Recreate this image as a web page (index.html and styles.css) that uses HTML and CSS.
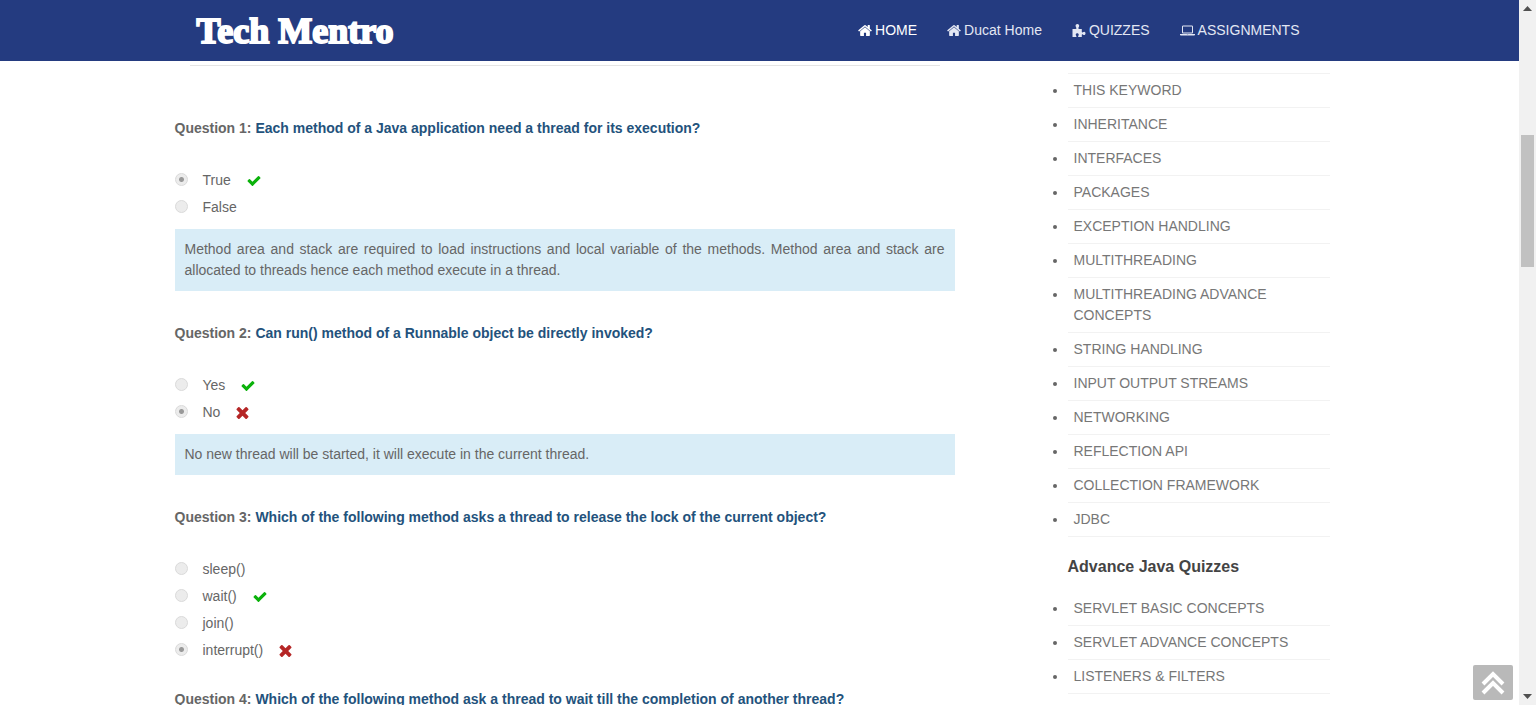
FILE: index.html
```html
<!DOCTYPE html>
<html lang="en">
<head>
<meta charset="utf-8">
<title>Tech Mentro - Java Quiz</title>
<link rel="stylesheet" href="styles.css">
</head>
<body>
<svg class="sprite" aria-hidden="true">
  <symbol id="home" viewBox="64 128 1664 1536"><path d="M1472 992v480q0 26-19 45t-45 19h-384v-384h-256v384h-384q-26 0-45-19t-19-45v-480q0-1 .5-3t.5-3l575-474 575 474q1 2 1 6zm223-69l-62 74q-8 9-21 11h-3q-13 0-21-7l-692-577-692 577q-12 8-24 7-13-2-21-11l-62-74q-8-10-7-23.500t11-21.500l719-599q32-26 76-26t76 26l244 204v-195q0-14 9-23t23-9h192q14 0 23 9t9 23v408l219 182q10 8 11 21.500t-7 23.500z"/></symbol>
  <symbol id="puzzle" viewBox="0 0 14 14"><path d="M0 5.300h3.300c1 0 1.200-.6.800-1.300C3.500 3 3.300 2.300 3.300 1.800 3.300.8 4.100 0 5.200 0s2 .8 2 1.800c0 .7-.3 1.300-.7 2-.5.900-.2 1.500.8 1.500H10v2.900c0 .9.500 1.100 1.200.7.500-.3 1-.5 1.400-.5.900 0 1.400.8 1.400 1.700s-.6 1.700-1.400 1.700c-.5 0-1-.3-1.400-.6-.7-.5-1.200-.2-1.200.6V14H6.900c-.9 0-1.100-.5-.7-1.200.3-.5.5-.9.500-1.400 0-.9-.7-1.500-1.600-1.500s-1.600.6-1.600 1.500c0 .5.300 1 .6 1.400.4.600.2 1.200-.7 1.200H0z"/></symbol>
  <symbol id="laptop" viewBox="0 128 1920 1280"><path d="M416 1152q-66 0-113-47t-47-113v-704q0-66 47-113t113-47h1088q66 0 113 47t47 113v704q0 66-47 113t-113 47h-1088zm-32-864v704q0 13 9.500 22.500t22.500 9.500h1088q13 0 22.500-9.500t9.500-22.500v-704q0-13-9.500-22.500t-22.500-9.500h-1088q-13 0-22.500 9.500t-9.500 22.500zm1376 928h160v96q0 40-47 68t-113 28h-1600q-66 0-113-28t-47-68v-96h1760zm-720 96q16 0 16-16t-16-16h-160q-16 0-16 16t16 16h160z"/></symbol>
  <symbol id="check" viewBox="121 334 1550 1188"><path d="M1671 566q0 40-28 68l-724 724-136 136q-28 28-68 28t-68-28l-136-136-362-362q-28-28-28-68t28-68l136-136q28-28 68-28t68 28l294 295 656-657q28-28 68-28t68 28l136 136q28 28 28 68z"/></symbol>
  <symbol id="times" viewBox="302 366 1188 1188"><path d="M1490 1322q0 40-28 68l-136 136q-28 28-68 28t-68-28l-294-294-294 294q-28 28-68 28t-68-28l-136-136q-28-28-28-68t28-68l294-294-294-294q-28-28-28-68t28-68l136-136q28-28 68-28t68 28l294 294 294-294q28-28 68-28t68 28l136 136q28 28 28 68t-28 68l-294 294 294 294q28 28 28 68z"/></symbol>
</svg>

<header class="topbar">
  <div class="container topbar-inner">
    <a class="logo" href="#">Tech Mentro</a>
    <nav class="menu">
      <a class="active" href="#"><svg class="nav-icon"><use href="#home"/></svg>HOME</a>
      <a href="#"><svg class="nav-icon"><use href="#home"/></svg>Ducat Home</a>
      <a href="#"><svg class="nav-icon"><use href="#puzzle"/></svg>QUIZZES</a>
      <a href="#"><svg class="nav-icon wide"><use href="#laptop"/></svg>ASSIGNMENTS</a>
    </nav>
  </div>
</header>

<div class="container page">
  <main class="quiz">
    <hr class="rule">

    <section class="question">
      <h2>Question 1: <span>Each method of a Java application need a thread for its execution?</span></h2>
      <div class="options">
        <label><input type="radio" name="q1" checked disabled>True<svg class="mark right"><use href="#check"/></svg></label>
        <label><input type="radio" name="q1" disabled>False</label>
      </div>
      <p class="note">Method area and stack are required to load instructions and local variable of the methods. Method area and stack are allocated to threads hence each method execute in a thread.</p>
    </section>

    <section class="question">
      <h2>Question 2: <span>Can run() method of a Runnable object be directly invoked?</span></h2>
      <div class="options">
        <label><input type="radio" name="q2" disabled>Yes<svg class="mark right"><use href="#check"/></svg></label>
        <label><input type="radio" name="q2" checked disabled>No<svg class="mark wrong"><use href="#times"/></svg></label>
      </div>
      <p class="note">No new thread will be started, it will execute in the current thread.</p>
    </section>

    <section class="question">
      <h2>Question 3: <span>Which of the following method asks a thread to release the lock of the current object?</span></h2>
      <div class="options">
        <label><input type="radio" name="q3" disabled>sleep()</label>
        <label><input type="radio" name="q3" disabled>wait()<svg class="mark right"><use href="#check"/></svg></label>
        <label><input type="radio" name="q3" disabled>join()</label>
        <label><input type="radio" name="q3" checked disabled>interrupt()<svg class="mark wrong"><use href="#times"/></svg></label>
      </div>
    </section>

    <section class="question">
      <h2>Question 4: <span>Which of the following method ask a thread to wait till the completion of another thread?</span></h2>
    </section>
  </main>

  <aside class="sidebar">
    <ul class="topics">
      <li><a href="#">OPERATORS</a></li>
      <li><a href="#">THIS KEYWORD</a></li>
      <li><a href="#">INHERITANCE</a></li>
      <li><a href="#">INTERFACES</a></li>
      <li><a href="#">PACKAGES</a></li>
      <li><a href="#">EXCEPTION HANDLING</a></li>
      <li><a href="#">MULTITHREADING</a></li>
      <li><a href="#">MULTITHREADING ADVANCE CONCEPTS</a></li>
      <li><a href="#">STRING HANDLING</a></li>
      <li><a href="#">INPUT OUTPUT STREAMS</a></li>
      <li><a href="#">NETWORKING</a></li>
      <li><a href="#">REFLECTION API</a></li>
      <li><a href="#">COLLECTION FRAMEWORK</a></li>
      <li><a href="#">JDBC</a></li>
    </ul>
    <h3>Advance Java Quizzes</h3>
    <ul class="topics">
      <li><a href="#">SERVLET BASIC CONCEPTS</a></li>
      <li><a href="#">SERVLET ADVANCE CONCEPTS</a></li>
      <li><a href="#">LISTENERS &amp; FILTERS</a></li>
      <li><a href="#">JSP BASIC CONCEPTS</a></li>
    </ul>
  </aside>
</div>

<button class="to-top" type="button" aria-label="Back to top">
  <svg viewBox="0 0 24 24"><path d="M2 13 12 3l10 10M2 22l10-10 10 10"/></svg>
</button>

<div class="scrollbar" aria-hidden="true">
  <svg class="arrow" viewBox="0 0 17 17"><path d="M4 11h9L8.500 6z"/></svg>
  <div class="track"><div class="thumb"></div></div>
  <svg class="arrow" viewBox="0 0 17 17"><path d="M4 6h9l-4.500 5z"/></svg>
</div>
</body>
</html>
```
FILE: styles.css
```css
* { box-sizing: border-box; }

body {
  margin: 0;
  height: 100vh;
  overflow: hidden;
  padding-right: 17px;
  background: #fff;
  color: #666;
  font: 14px/21px "Liberation Sans", Arial, sans-serif;
}

a { color: inherit; text-decoration: none; }

.sprite { position: absolute; width: 0; height: 0; }

.container { width: 100%; max-width: 1170px; margin: 0 auto; }

.topbar {
  position: fixed;
  top: 0;
  left: 0;
  right: 17px;
  z-index: 2;
  height: 61px;
  background: #243b80;
}

.topbar-inner {
  height: 100%;
  padding: 0 45px 0 22px;
  display: flex;
  align-items: center;
  justify-content: space-between;
}

.logo {
  color: #fff;
  font: bold 36px/60px "Liberation Serif", "Times New Roman", serif;
  -webkit-text-stroke: 2px #fff;
}

.menu { display: flex; gap: 30px; color: #e3e7f3; }
.menu a { display: flex; align-items: center; gap: 3px; }
.menu .active { color: #fff; }
.nav-icon { width: 14px; height: 13px; fill: currentColor; }
.nav-icon.wide { width: 15px; }

.page { display: flex; justify-content: space-between; padding-right: 15px; }

.quiz { flex: 0 1 780px; padding-top: 65px; }

.rule {
  margin: 0 15px 52px;
  border: 0;
  border-top: 1px solid #e5e5e5;
}

.question { margin-bottom: 25px; }
.question h2 { margin: 0 0 28px; font-size: 14px; line-height: 21px; }
.question h2 span { color: #23527c; }

.options label { display: flex; align-items: center; height: 27px; }

.options input {
  appearance: none;
  width: 13px;
  height: 13px;
  margin: 0 15px 3px 0;
  border: 1px solid #dadada;
  border-radius: 50%;
  background: #ececec;
}

.options input:checked {
  background: radial-gradient(circle, #999 0 2px, #ececec 3px);
}

.mark { height: 12px; margin-left: 16px; }
.right { width: 14px; height: 10px; fill: #0bb20b; }
.wrong { width: 13px; fill: #b52626; }

.note {
  margin: 8px 0 32px;
  padding: 10px;
  background: #d9edf7;
  text-align: justify;
}

.sidebar { flex: 0 0 262px; padding-top: 40px; }
.sidebar h3 { margin: 19px 0 15px; font-size: 16px; line-height: 21px; color: #444; }

.topics { margin: 0; padding: 0; }
.topics li { padding: 6px; border-bottom: 1px solid #f2f2f2; }
.topics a { color: #777; }

.to-top {
  position: fixed;
  right: 23px;
  bottom: 5px;
  width: 40px;
  height: 35px;
  padding: 0;
  display: grid;
  place-items: center;
  border: 0;
  border-radius: 2px;
  background: #b9b9b9;
}

.to-top svg { width: 24px; height: 24px; fill: none; stroke: #fff; stroke-width: 4; }

.scrollbar {
  position: fixed;
  top: 0;
  right: 0;
  bottom: 0;
  width: 17px;
  display: flex;
  flex-direction: column;
  background: #f1f1f1;
}

.arrow { width: 17px; height: 17px; fill: #505050; }
.track { flex: 1; padding: 118px 2px 0; }
.thumb { height: 132px; background: #c1c1c1; }
```
